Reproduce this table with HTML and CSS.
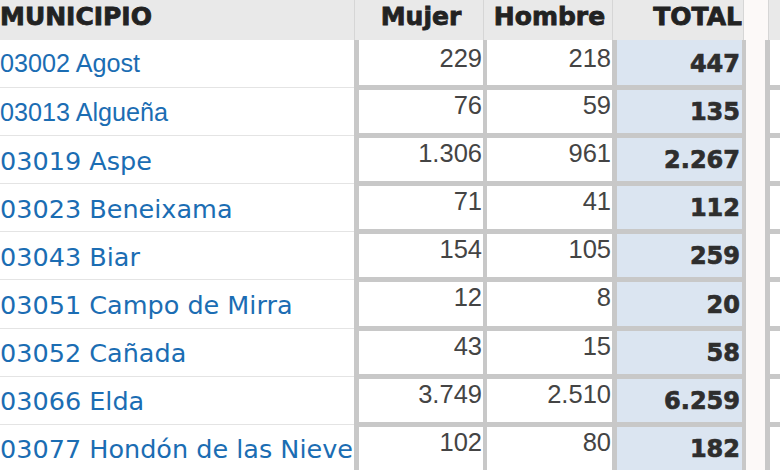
FILE: index.html
```html
<!DOCTYPE html>
<html lang="es">
<head>
<meta charset="utf-8">
<title>Municipios</title>
<link rel="stylesheet" href="styles.css">
</head>
<body>
<div class="page">
  <div class="tbl">
    <div class="thead">
      <div class="h hmun">MUNICIPIO</div>
      <div class="h hm">Mujer</div>
      <div class="h hh">Hombre</div>
      <div class="h ht">TOTAL</div>
    </div>
    <div class="row first"><div class="mun arial">03002 Agost</div><div class="cell m">229</div><div class="cell w">218</div><div class="cell t">447</div></div>
    <div class="row"><div class="mun arial">03013 Algueña</div><div class="cell m">76</div><div class="cell w">59</div><div class="cell t">135</div></div>
    <div class="row"><div class="mun">03019 Aspe</div><div class="cell m">1.306</div><div class="cell w">961</div><div class="cell t">2.267</div></div>
    <div class="row"><div class="mun">03023 Beneixama</div><div class="cell m">71</div><div class="cell w">41</div><div class="cell t">112</div></div>
    <div class="row"><div class="mun">03043 Biar</div><div class="cell m">154</div><div class="cell w">105</div><div class="cell t">259</div></div>
    <div class="row"><div class="mun">03051 Campo de Mirra</div><div class="cell m">12</div><div class="cell w">8</div><div class="cell t">20</div></div>
    <div class="row"><div class="mun">03052 Cañada</div><div class="cell m">43</div><div class="cell w">15</div><div class="cell t">58</div></div>
    <div class="row"><div class="mun">03066 Elda</div><div class="cell m">3.749</div><div class="cell w">2.510</div><div class="cell t">6.259</div></div>
    <div class="row"><div class="mun">03077 Hondón de las Nieves</div><div class="cell m">102</div><div class="cell w">80</div><div class="cell t">182</div></div>
  </div>
  <div class="tbl2">
    <div class="thead2"></div>
    <div class="row2 first"></div>
    <div class="row2"></div>
    <div class="row2"></div>
    <div class="row2"></div>
    <div class="row2"></div>
    <div class="row2"></div>
    <div class="row2"></div>
    <div class="row2"></div>
    <div class="row2"></div>
  </div>
</div>
</body>
</html>
```
FILE: styles.css
```css
html, body {
  margin: 0;
  padding: 0;
}
body {
  background: #fcf9f8;
  width: 780px;
  height: 470px;
  overflow: hidden;
}
.page {
  display: flex;
  gap: 19px;
}
.tbl {
  width: 746px;
  flex: none;
}
.thead {
  display: flex;
  height: 40px;
  font-family: "DejaVu Sans", sans-serif;
  font-weight: bold;
  font-size: 25px;
  color: #222;
  -webkit-text-stroke: 0.8px #222;
}
.h {
  box-sizing: border-box;
  height: 40px;
  padding-top: 2px;
  background: #e9e9e9;
  white-space: nowrap;
}
.hmun {
  width: 354px;
}
.hm {
  width: 129px;
  border-left: 1px solid #d6d6d6;
  padding-left: 4px;
  text-align: center;
}
.hh {
  width: 129px;
  border-left: 1px solid #d6d6d6;
  padding-left: 3px;
  text-align: center;
}
.ht {
  width: 132px;
  border-left: 1px solid #d6d6d6;
  border-right: 1px solid #d6d6d6;
  padding-right: 1px;
  text-align: right;
}
.row {
  display: flex;
  height: 48.1px;
  background: #fff;
}
.row.first {
  height: 50.1px;
}
.mun {
  box-sizing: border-box;
  width: 354px;
  height: calc(100% - 2px);
  border-bottom: 1px solid #e4e4e4;
  display: flex;
  align-items: center;
  white-space: nowrap;
  overflow: hidden;
  color: #1b6db3;
  font-family: "DejaVu Sans", sans-serif;
  font-size: 25.5px;
}
.mun.arial {
  font-family: "Liberation Sans", Arial, sans-serif;
  font-size: 25.2px;
}
.cell {
  box-sizing: border-box;
  height: 100%;
  border-bottom: 5px solid #c8c8c8;
  font-family: "Liberation Sans", Arial, sans-serif;
  font-size: 25.5px;
  color: #444;
  text-align: right;
  padding: 1px 1px 0 0;
}
.first .cell {
  padding-top: 4px;
}
.m {
  width: 129px;
  border-left: 5px solid #c8c8c8;
}
.w {
  width: 129px;
  border-left: 4px solid #c8c8c8;
}
.t {
  width: 134px;
  border-left: 5px solid #c8c8c8;
  border-right: 4px solid #c8c8c8;
  background: #dbe5f1;
  font-family: "DejaVu Sans", sans-serif;
  font-weight: bold;
  font-size: 24px;
  color: #2e2e2e;
  -webkit-text-stroke: 0.7px #2e2e2e;
  display: flex;
  align-items: center;
  justify-content: flex-end;
  padding-right: 2px;
}
.first .t {
  padding-top: 3px;
}
.tbl2 {
  flex: 1;
}
.thead2 {
  height: 40px;
  margin-left: 3px;
  border-left: 1px solid #d6d6d6;
  background: #e9e9e9;
}
.row2 {
  box-sizing: border-box;
  height: 48.1px;
  background: #fff;
  border-left: 5px solid #c8c8c8;
  border-bottom: 5px solid #c8c8c8;
}
.row2.first {
  height: 50.1px;
}
```
